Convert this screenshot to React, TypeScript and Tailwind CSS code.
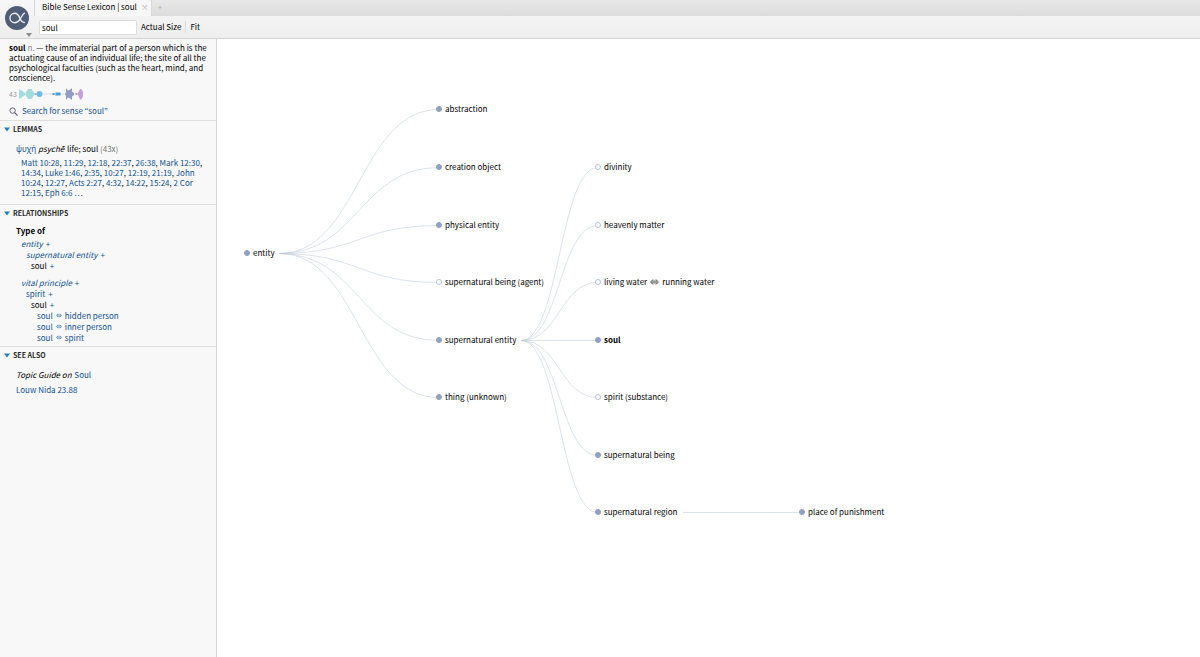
import React, { useState } from 'react';
import { clsx } from 'clsx';

interface SenseNode {
  id: string;
  label: string;
  x: number;
  y: number;
  hollow?: boolean;
  current?: boolean;
  synonym?: string;
}

interface SenseLink {
  from: [number, number];
  to: string;
}

const nodes: SenseNode[] = [
  { id: 'entity', label: 'entity', x: 30, y: 214 },
  { id: 'abstraction', label: 'abstraction', x: 222, y: 70 },
  { id: 'creation', label: 'creation object', x: 222, y: 128 },
  { id: 'physical', label: 'physical entity', x: 222, y: 186 },
  { id: 'agent', label: 'supernatural being (agent)', x: 222, y: 243, hollow: true },
  { id: 'supernatural', label: 'supernatural entity', x: 222, y: 301 },
  { id: 'thing', label: 'thing (unknown)', x: 222, y: 358 },
  { id: 'divinity', label: 'divinity', x: 381, y: 128, hollow: true },
  { id: 'heavenly', label: 'heavenly matter', x: 381, y: 186, hollow: true },
  { id: 'water', label: 'living water', synonym: 'running water', x: 381, y: 243, hollow: true },
  { id: 'soul', label: 'soul', x: 381, y: 301, current: true },
  { id: 'spirit', label: 'spirit (substance)', x: 381, y: 358, hollow: true },
  { id: 'being', label: 'supernatural being', x: 381, y: 416 },
  { id: 'region', label: 'supernatural region', x: 381, y: 473 },
  { id: 'punishment', label: 'place of punishment', x: 585, y: 473 },
];

const fromEntity: [number, number] = [62, 214];
const fromSupernatural: [number, number] = [304, 301];

const links: SenseLink[] = [
  ...['abstraction', 'creation', 'physical', 'agent', 'supernatural', 'thing'].map((to) => ({ from: fromEntity, to })),
  ...['divinity', 'heavenly', 'water', 'soul', 'spirit', 'being', 'region'].map((to) => ({ from: fromSupernatural, to })),
  { from: [466, 473], to: 'punishment' },
];

const verses = [
  'Matt 10:28', '11:29', '12:18', '22:37', '26:38', 'Mark 12:30', '14:34', 'Luke 1:46', '2:35', '10:27',
  '12:19', '21:19', 'John 10:24', '12:27', 'Acts 2:27', '4:32', '14:22', '15:24', '2 Cor 12:15', 'Eph 6:6',
];

const linkClass = 'text-[#0f5291] hover:underline';

// half a pixel down keeps the level line crisp
const linkPath = ([x1, y1]: [number, number], x2: number, y2: number) => {
  const mid = (x1 + x2) / 2;
  return `M${x1} ${y1 + 0.5}C${mid} ${y1 + 0.5} ${mid} ${y2 + 0.5} ${x2} ${y2 + 0.5}`;
};

const Equivalent = ({ className }: { className?: string }) => (
  <svg viewBox="0 0 10 8" className={clsx('inline-block shrink-0', className)} fill="none" stroke="currentColor" aria-hidden="true">
    <path d="M2 3h6M2 5h6M3.4 1.2L.7 4l2.7 2.8M6.6 1.2L9.3 4 6.6 6.8" strokeWidth="1" />
  </svg>
);

const Section = ({ title, children }: { title: string; children: React.ReactNode }) => {
  const [open, setOpen] = useState(true);

  return (
    <section className="border-t border-[#dedede]">
      <h2>
        <button
          type="button"
          aria-expanded={open}
          onClick={() => setOpen(!open)}
          className="flex w-full items-center gap-[3px] px-1 py-[3px] text-left text-[7px] leading-[10px] font-bold text-[#2a2a2a]"
        >
          <svg viewBox="0 0 6 5" className={clsx('h-[5px] w-[6px]', !open && '-rotate-90')} fill="#2480bd" aria-hidden="true">
            <path d="M0 .4h6L3 4.6z" />
          </svg>
          {title}
        </button>
      </h2>
      {open && children}
    </section>
  );
};

interface RowProps {
  label: string;
  indent: string;
  italic?: boolean;
  plain?: boolean;
  other?: string;
}

const Row = ({ label, indent, italic, plain, other }: RowProps) => (
  <li className={clsx('flex items-center gap-[3px]', indent)}>
    <a href="#sense" className={clsx(plain ? 'text-black' : linkClass, italic && 'italic')}>{label}</a>
    {other ? (
      <>
        <Equivalent className="h-[5px] w-[6px] text-[#2566a0]" />
        <a href="#sense" className={linkClass}>{other}</a>
      </>
    ) : (
      <button type="button" aria-label={`Expand ${label}`} className="text-[#0f5291]">+</button>
    )}
  </li>
);

const Distribution = () => (
  <svg viewBox="0 0 68 14" className="h-[14px] w-[68px]" aria-hidden="true">
    <path d="M2 7h62" stroke="#d9dfe6" strokeWidth="1" />
    <path d="M1 2.5h1L7 6v2l-5 3.5H1z" fill="#a3dcdc" />
    <path d="M7.500 6L10 2h3.500L16 6v2l-2.500 4H10L7.500 8z" fill="#a3dcdc" />
    <path d="M16.500 6h2v2h-2z" fill="#7fc9dc" />
    <circle cx="21.500" cy="7" r="3" fill="#74bce8" />
    <path d="M34.500 6h2v2h-2zM37.500 5.500h5v3h-5z" fill="#4b9bd2" />
    <path d="M48 1l2 2.500L51.500 3 54 1v3.500L56 6v2l-2 1.500V13l-2.500-2-1.500-.5L48 13V9l-1-2 1-2z" fill="#929dc6" />
    <path d="M57.500 6h2v2h-2z" fill="#b3a3d3" />
    <path d="M60 6l2-4h1.500L65 5v4l-1.500 3.500H62L60 8z" fill="#c4a0da" />
  </svg>
);

const Sidebar = () => (
  <aside className="w-[217px] shrink-0 border-r border-[#d4d4d4] bg-[#f8f8f8]">
    <div className="pt-1 pr-2 pb-[3px] pl-[9px]">
      <p className="leading-[10px]">
        <b>soul</b> <span className="text-[#8b8b8b]">n.</span> — the immaterial part of a person which is the actuating cause of an
        individual life; the site of all the psychological faculties (such as the heart, mind, and conscience).
      </p>
      <div className="mt-1 flex items-center gap-px text-[7px] text-[#999]">
        43
        <Distribution />
      </div>
      <a href="#search" className={clsx('mt-1 flex items-center gap-1 leading-[12px]', linkClass)}>
        <svg viewBox="0 0 10 10" className="h-[9px] w-[9px]" fill="none" stroke="#555e68" aria-hidden="true">
          <circle cx="4" cy="4" r="3" />
          <path d="M6.200 6.200L9.500 9.500" strokeWidth="1.300" />
        </svg>
        Search for sense “soul”
      </a>
    </div>

    <Section title="LEMMAS">
      <div className="pt-[7px] pr-3 pb-1.5 pl-4">
        <p className="leading-[10px]">
          <a href="#lemma" className={clsx("font-['Noto_Sans',sans-serif]", linkClass)}>ψυχή</a> <i className="pr-px">psychē</i> life; soul{' '}
          <span className="text-[#777]">(43x)</span>
        </p>
        <p className="mt-1 pl-[5px] leading-[10px]">
          {verses.map((verse, index) => (
            <React.Fragment key={verse}>
              {index > 0 && ', '}
              <a href="#verse" className={linkClass}>{verse}</a>
            </React.Fragment>
          ))}
          {' '}
          <a href="#more" className={linkClass}>…</a>
        </p>
      </div>
    </Section>

    <Section title="RELATIONSHIPS">
      <div className="px-4 pt-1 pb-[3px]">
        <h3 className="font-bold">Type of</h3>
        <ul className="mt-px leading-[11px]">
          <Row label="entity" indent="pl-[5px]" italic />
          <Row label="supernatural entity" indent="pl-[10px]" italic />
          <Row label="soul" indent="pl-[15px]" plain />
        </ul>
        <ul className="mt-1.5 leading-[11px]">
          <Row label="vital principle" indent="pl-[5px]" italic />
          <Row label="spirit" indent="pl-[10px]" />
          <Row label="soul" indent="pl-[15px]" plain />
          <Row label="soul" indent="pl-[21px]" other="hidden person" />
          <Row label="soul" indent="pl-[21px]" other="inner person" />
          <Row label="soul" indent="pl-[21px]" other="spirit" />
        </ul>
      </div>
    </Section>

    <Section title="SEE ALSO">
      <div className="flex flex-col gap-[3px] px-4 pt-1.5">
        <p><i className="pr-px">Topic Guide on</i> <a href="#guide" className={linkClass}>Soul</a></p>
        <p><a href="#louw-nida" className={linkClass}>Louw Nida 23.88</a></p>
      </div>
    </Section>
  </aside>
);

const SenseGraph = () => (
  <main className="relative min-w-0 flex-1 overflow-hidden bg-white">
    <svg className="absolute inset-0 h-full w-full" fill="none" stroke="#bcc7da" strokeOpacity="0.5" aria-hidden="true">
      {links.map(({ from, to }) => {
        const node = nodes.find((n) => n.id === to)!;
        return <path key={to} d={linkPath(from, node.x, node.y)} />;
      })}
    </svg>
    {nodes.map((node) => (
      <button
        key={node.id}
        type="button"
        className="absolute flex -translate-y-1/2 items-center gap-[3px] whitespace-nowrap"
        style={{ left: node.x - 3, top: node.y }}
      >
        <span
          className={clsx(
            'size-[6px] rounded-full border',
            node.hollow ? 'border-[#b4c3da] bg-white' : 'border-[#8fa1bf] bg-[#8fa1bf]'
          )}
        />
        <span className={clsx(node.current && 'font-bold')}>{node.label}</span>
        {node.synonym && (
          <>
            <Equivalent className="h-[8px] w-[9px] text-[#444]" />
            <span>{node.synonym}</span>
          </>
        )}
      </button>
    ))}
  </main>
);

const Header = () => {
  const [query, setQuery] = useState('soul');

  return (
    <header className="flex border-b border-[#d3d3d3] bg-linear-to-b from-[#f7f7f7] to-[#eeeeee]">
      <button type="button" aria-label="Panel menu" className="relative flex w-[34px] shrink-0 justify-center pt-1.5">
        <svg viewBox="0 0 24 24" className="size-6" aria-hidden="true">
          <circle cx="12" cy="12" r="12" fill="#4f5d76" />
          <path
            d="M19.500 7.200C17.500 8 16.500 11 14.800 13.600c-1.300 2-2.900 3.100-5 3.100-2.800 0-4.800-2-4.800-4.700s2-4.700 4.700-4.700c2.500 0 3.800 1.800 4.900 4.500 1 2.500 2 4.700 4.700 4.700"
            fill="none"
            stroke="#e9ecf1"
            strokeWidth="1.400"
            strokeLinecap="round"
          />
        </svg>
        <svg viewBox="0 0 6 4" className="absolute right-[2px] bottom-px h-[4px] w-[6px]" fill="#8c8c8c" aria-hidden="true">
          <path d="M0 0h6L3 4z" />
        </svg>
      </button>
      <div className="min-w-0 flex-1">
        <div className="flex h-4 bg-linear-to-b from-[#e8e8e8] to-[#dcdcdc] text-[#b5b5b5]">
          <div className="flex items-center gap-1 border-x border-[#d6d6d6] bg-[#f7f7f7] pr-0.5 pb-0.5 pl-[7px]">
            <span className="text-black">Bible Sense Lexicon | soul</span>
            <button type="button" aria-label="Close tab" className="leading-none">×</button>
          </div>
          <button type="button" aria-label="New tab" className="px-1.5 pb-0.5 leading-none">+</button>
        </div>
        <div className="flex h-[22px] items-center pl-[5px]">
          <input
            aria-label="Sense"
            value={query}
            onChange={(e) => setQuery(e.target.value)}
            className="h-[15px] w-[98px] rounded-xs border border-[#dcdcdc] bg-white px-0.5 outline-none"
          />
          <button type="button" className="px-1">Actual Size</button>
          <button type="button" className="border-l border-[#dcdcdc] px-1">Fit</button>
        </div>
      </div>
    </header>
  );
};

export default function App() {
  return (
    <div className="flex min-h-screen flex-col font-['Noto_Sans_CJK_KR','Noto_Sans',sans-serif] text-[8px] leading-[12px] font-normal text-black">
      <Header />
      <div className="flex flex-1">
        <Sidebar />
        <SenseGraph />
      </div>
    </div>
  );
}
